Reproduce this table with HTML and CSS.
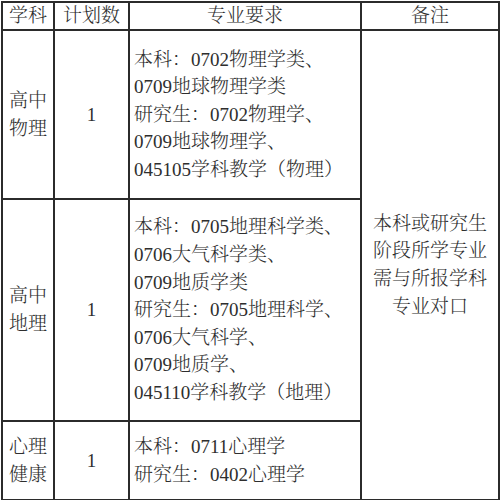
FILE: index.html
```html
<!DOCTYPE html>
<html lang="zh-CN">
<head>
<meta charset="utf-8">
<link rel="stylesheet" href="styles.css">
</head>
<body>
<table class="plan">
  <colgroup>
    <col class="c-subj">
    <col class="c-num">
    <col class="c-req">
    <col class="c-note">
  </colgroup>
  <tr class="head">
    <td>学科</td>
    <td>计划数</td>
    <td>专业要求</td>
    <td>备注</td>
  </tr>
  <tr class="r1">
    <td class="subj">高中<br>物理</td>
    <td class="num">1</td>
    <td class="req">本科：0702物理学类、<br>0709地球物理学类<br>研究生：0702物理学、<br>0709地球物理学、<br>045105学科教学（物理）</td>
    <td class="note" rowspan="3">本科或研究生<br>阶段所学专业<br>需与所报学科<br>专业对口</td>
  </tr>
  <tr class="r2">
    <td class="subj">高中<br>地理</td>
    <td class="num">1</td>
    <td class="req">本科：0705地理科学类、<br>0706大气科学类、<br>0709地质学类<br>研究生：0705地理科学、<br>0706大气科学、<br>0709地质学、<br>045110学科教学（地理）</td>
  </tr>
  <tr class="r3">
    <td class="subj">心理<br>健康</td>
    <td class="num">1</td>
    <td class="req">本科：0711心理学<br>研究生：0402心理学</td>
  </tr>
</table>
</body>
</html>
```

FILE: styles.css
```css
html, body {
  margin: 0;
  padding: 0;
  background: #fff;
}

body {
  width: 500px;
  height: 500px;
  overflow: hidden;
}

.plan {
  border-collapse: collapse;
  table-layout: fixed;
  width: 497px;
  margin: 1px 0 0 1px;
  font-family: "Liberation Serif", "Noto Serif CJK SC", "Noto Sans CJK SC", serif;
  font-size: 19px;
  font-weight: 300;
  line-height: 27.6px;
  color: #2e2e2e;
}

.c-subj { width: 52px; }
.c-num { width: 75px; }
.c-req { width: 232px; }
.c-note { width: 138px; }

.plan td {
  border: 2px solid #2b2b2b;
  padding: 0;
  text-align: center;
  vertical-align: middle;
}

.head td {
  height: 26px;
  line-height: 26px;
}

.r1 td { height: 167px; }
.r2 td { height: 220px; }
.r3 td { height: 77px; }

.plan td.req {
  text-align: left;
  padding-left: 4px;
  white-space: nowrap;
}

.plan td.subj {
  line-height: 28px;
}

.plan td.note {
  line-height: 27.6px;
}
```
